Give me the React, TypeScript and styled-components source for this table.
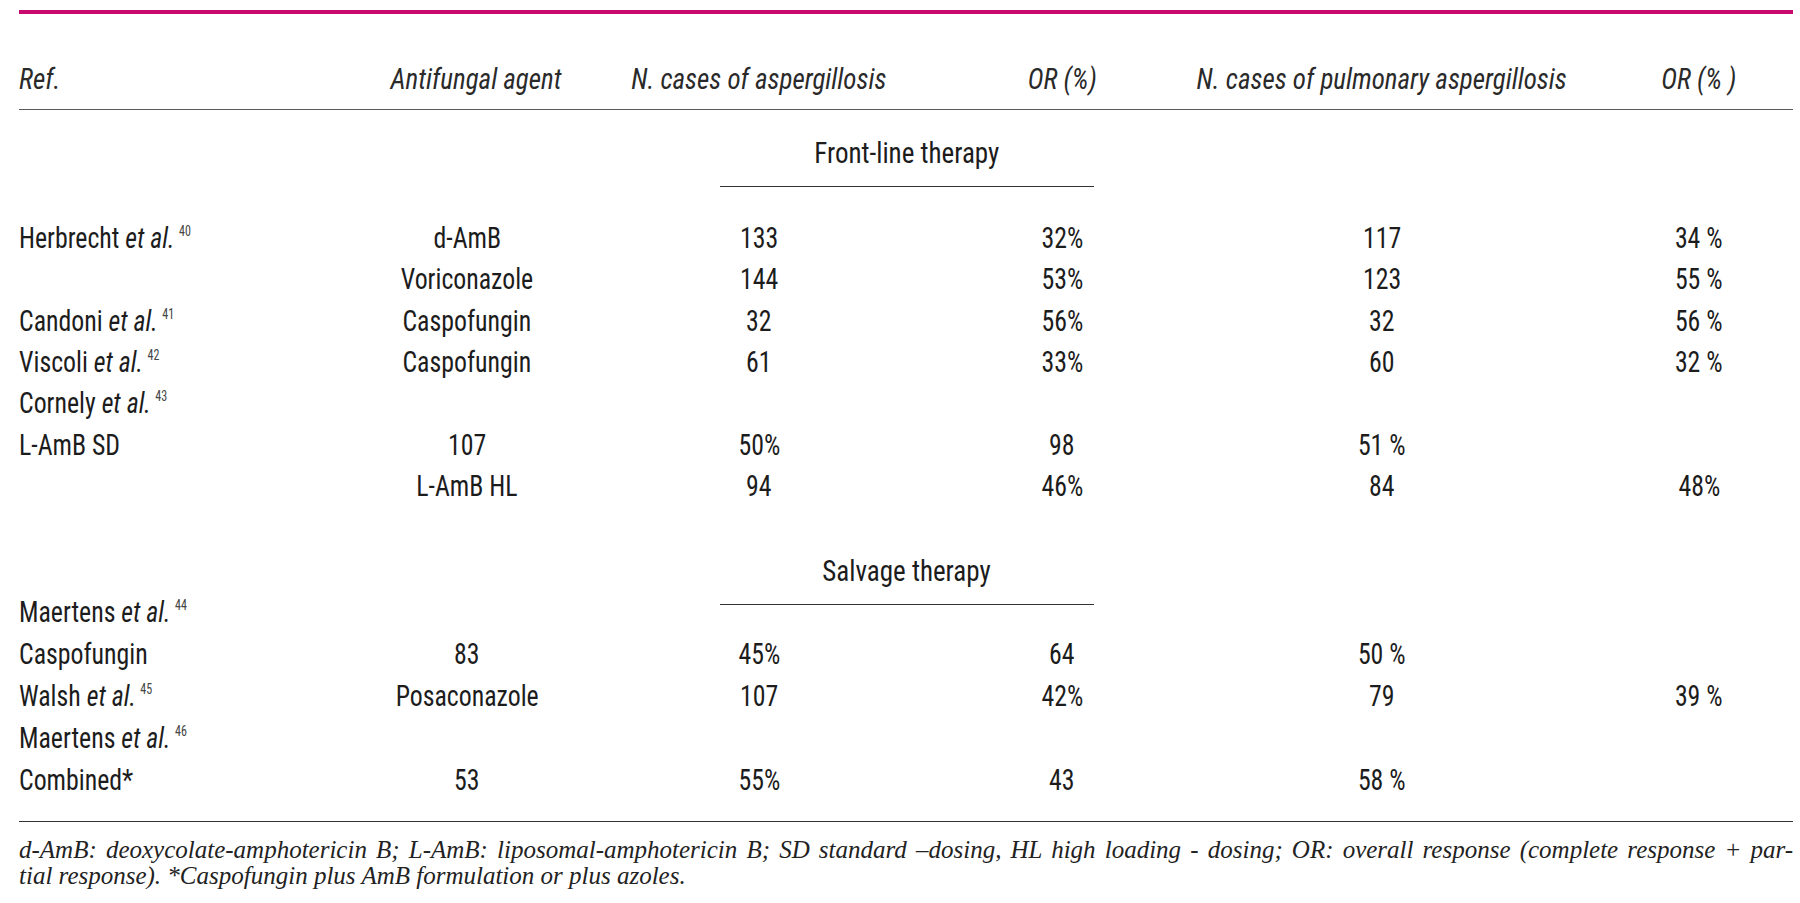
import React from 'react'
import styled, { createGlobalStyle } from 'styled-components'

const COLUMNS = '362px 172px 412px 194px 446px 188px'

const GlobalStyle = createGlobalStyle`
    html, body {
        margin: 0;
        padding: 0;
        background: #ffffff;
    }
    body {
        color: #1c1c1c;
        font-family: "Roboto Condensed", "DejaVu Sans Condensed", "Liberation Sans", sans-serif;
        font-stretch: condensed;
    }
`

type Cell = React.ReactNode

const frontLine: Cell[][] = [
    [<Author name="Herbrecht" ref_="40" />, 'd-AmB', '133', '32%', '117', '34 %'],
    ['', 'Voriconazole', '144', '53%', '123', '55 %'],
    [<Author name="Candoni" ref_="41" />, 'Caspofungin', '32', '56%', '32', '56 %'],
    [<Author name="Viscoli" ref_="42" />, 'Caspofungin', '61', '33%', '60', '32 %'],
    [<Author name="Cornely" ref_="43" />],
    ['L-AmB SD', '107', '50%', '98', '51 %', ''],
    ['', 'L-AmB HL', '94', '46%', '84', '48%'],
]

const salvage: Cell[][] = [
    [<Author name="Maertens" ref_="44" />],
    ['Caspofungin', '83', '45%', '64', '50 %', ''],
    [<Author name="Walsh" ref_="45" />, 'Posaconazole', '107', '42%', '79', '39 %'],
    [<Author name="Maertens" ref_="46" />],
    ['Combined*', '53', '55%', '43', '58 %', ''],
]

const headers = [
    'Ref.',
    'Antifungal agent',
    'N. cases of aspergillosis',
    'OR (%)',
    'N. cases of pulmonary aspergillosis',
    'OR (% )',
]

function Author({ name, ref_ }: { name: string; ref_: string }) {
    return (
        <>
            {name} <Em>et al.</Em>
            <Sup>{ref_}</Sup>
        </>
    )
}

function Rows({ rows }: { rows: Cell[][] }) {
    return (
        <>
            {rows.map((row, i) => (
                <Row key={i}>
                    {row.map((cell, j) => (
                        <DataCell key={j} first={j === 0}>
                            <DataText first={j === 0}>{cell}</DataText>
                        </DataCell>
                    ))}
                </Row>
            ))}
        </>
    )
}

export default function App() {
    return (
        <Page>
            <GlobalStyle />
            <TopRule />
            <HeaderRow>
                {headers.map((h, i) => (
                    <HeaderCell key={i} first={i === 0}>
                        <HeaderText first={i === 0}>{h}</HeaderText>
                    </HeaderCell>
                ))}
            </HeaderRow>

            <Section first>
                <SectionLabel>
                    <LabelText>Front-line therapy</LabelText>
                </SectionLabel>
            </Section>
            <Body first>
                <Rows rows={frontLine} />
            </Body>

            <Section>
                <SectionLabel>
                    <LabelText>Salvage therapy</LabelText>
                </SectionLabel>
            </Section>
            <Body>
                <Rows rows={salvage} />
            </Body>

            <Footnote>
                <FootLine justify>
                    d-AmB: deoxycolate-amphotericin B; L-AmB: liposomal-amphotericin B; SD standard –dosing, HL high
                    loading - dosing; OR: overall response (complete response + par-
                </FootLine>
                <FootLine>tial response). *Caspofungin plus AmB formulation or plus azoles.</FootLine>
            </Footnote>
        </Page>
    )
}

const Page = styled.div`
    width: 1774px;
    margin-left: 19px;
    padding-top: 10px;
`

const TopRule = styled.div`
    height: 4px;
    background: #c8096e;
`

const HeaderRow = styled.div`
    display: grid;
    grid-template-columns: ${COLUMNS};
    align-items: center;
    height: 96px;
    padding-top: 34px;
    box-sizing: border-box;
    border-bottom: 1.5px solid #5a5a5a;
`

const HeaderCell = styled.div<{ first?: boolean }>`
    white-space: nowrap;
    text-align: ${(p) => (p.first ? 'left' : 'center')};
`

const HeaderText = styled.span<{ first?: boolean }>`
    display: inline-block;
    font-style: italic;
    font-size: 30px;
    color: #2a2a2a;
    transform: scaleX(0.9);
    transform-origin: ${(p) => (p.first ? 'left' : 'center')};
`

const Section = styled.div<{ first?: boolean }>`
    display: flex;
    padding-top: ${(p) => (p.first ? '25px' : '47px')};
    margin-bottom: ${(p) => (p.first ? '30px' : '-15px')};
`

const SectionLabel = styled.div`
    margin-left: 701px;
    width: 374px;
    height: 36px;
    line-height: 36px;
    padding-bottom: 15px;
    text-align: center;
    border-bottom: 1px solid #333333;
`

const LabelText = styled.span`
    display: inline-block;
    font-size: 30px;
    transform: scaleX(0.9);
`

const Body = styled.div<{ first?: boolean }>`
    display: flex;
    flex-direction: column;
    --row-height: ${(p) => (p.first ? '41.3px' : '42.2px')};
`

const Row = styled.div`
    display: grid;
    grid-template-columns: ${COLUMNS};
    align-items: center;
    height: var(--row-height);
`

const DataCell = styled.div<{ first?: boolean }>`
    white-space: nowrap;
    text-align: ${(p) => (p.first ? 'left' : 'center')};
`

const DataText = styled.span<{ first?: boolean }>`
    display: inline-block;
    font-size: 30px;
    transform: scaleX(0.86);
    transform-origin: ${(p) => (p.first ? 'left' : 'center')};
`

const Em = styled.em`
    font-style: italic;
`

const Sup = styled.sup`
    font-size: 14px;
    margin-left: 5px;
    color: #444444;
    vertical-align: 12px;
    line-height: 0;
`

const Footnote = styled.div`
    margin-top: 20px;
    border-top: 1.5px solid #333333;
    padding-top: 15px;
    font-family: "Liberation Serif", "DejaVu Serif", serif;
    font-style: italic;
    font-size: 25px;
    line-height: 26px;
    color: #222222;
`

const FootLine = styled.div<{ justify?: boolean }>`
    text-align: ${(p) => (p.justify ? 'justify' : 'left')};
    text-align-last: ${(p) => (p.justify ? 'justify' : 'auto')};
`
